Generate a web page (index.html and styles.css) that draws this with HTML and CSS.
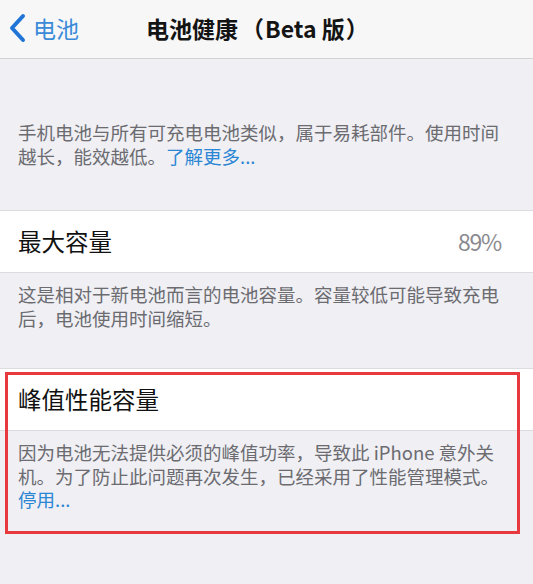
FILE: index.html
```html
<!DOCTYPE html>
<html lang="zh-CN">
<head>
<meta charset="utf-8">
<title>电池健康（Beta 版）</title>
<link rel="stylesheet" href="styles.css">
</head>
<body>
<header class="nav">
  <a class="back">
    <svg class="chev" width="18" height="30" viewBox="0 0 18 30"><polyline points="15,3 4,15 15,27" fill="none" stroke="#1f74d6" stroke-width="4" stroke-linecap="round" stroke-linejoin="round"/></svg>
    <span class="back-text">电池</span>
  </a>
  <h1 class="title">电池健康<span class="paren">（</span>Beta 版<span class="paren-close">）</span></h1>
</header>
<main>
  <p class="foot foot-first">手机电池与所有可充电电池类似，属于易耗部件。使用时间越长，能效越低。<span class="link">了解更多...</span></p>
  <div class="row">
    <span class="row-label">最大容量</span>
    <span class="row-value">89%</span>
  </div>
  <p class="foot">这是相对于新电池而言的电池容量。容量较低可能导致充电后，电池使用时间缩短。</p>
  <section class="peak">
    <div class="row row-peak">
      <span class="row-label">峰值性能容量</span>
    </div>
    <p class="foot">因为电池无法提供必须的峰值功率，导致此 iPhone 意外关机。为了防止此问题再次发生，已经采用了性能管理模式。<span class="link">停用...</span></p>
    <div class="highlight"></div>
  </section>
</main>
</body>
</html>
```

FILE: styles.css
```css
html, body {
  margin: 0;
  padding: 0;
}
body {
  width: 533px;
  height: 584px;
  overflow: hidden;
  background: #efeff4;
  font-family: "Noto Sans CJK SC", "Noto Sans", sans-serif;
  color: #111;
}
.nav {
  height: 58px;
  background: #f7f7f8;
  border-bottom: 1px solid #d3d3d6;
  display: flex;
  align-items: center;
  box-sizing: content-box;
}
.back {
  display: flex;
  align-items: center;
  margin-left: 8px;
  color: #3a8ad8;
}
.chev {
  display: block;
  margin-top: -2px;
}
.back-text {
  font-size: 23px;
  line-height: 30px;
  margin-left: 7px;
  margin-top: -3px;
}
.title {
  margin: -3px 0 0 67px;
  font-size: 23px;
  font-weight: 700;
  line-height: 30px;
  color: #141414;
}
.paren {
  margin: 0 1px 0 3px;
}
.paren-close {
  margin-left: 1px;
}
main {
  display: flex;
  flex-direction: column;
}
.foot {
  margin: 0;
  padding: 10px 18px 14px 18px;
  font-size: 18.5px;
  line-height: 23.5px;
  color: #6b6b70;
}
.foot-first {
  padding-top: 62px;
  padding-bottom: 42px;
}
.link {
  color: #2b86d3;
}
.row {
  height: 63px;
  background: #fff;
  border-top: 1px solid #dcdce0;
  border-bottom: 1px solid #dcdce0;
  box-sizing: border-box;
  display: flex;
  align-items: center;
  justify-content: space-between;
  padding: 0 32px 0 18px;
}
.row-label {
  font-size: 23.5px;
  color: #111;
  margin-top: -2px;
}
.row-value {
  font-size: 23px;
  letter-spacing: -1.2px;
  color: #8a8a8f;
  margin-top: -2px;
}
.peak {
  position: relative;
  margin-top: 24px;
}
.row-peak {
  height: 63px;
}
.highlight {
  position: absolute;
  left: 5px;
  top: 4px;
  width: 515px;
  height: 162px;
  border: 3px solid #e8393f;
  box-sizing: border-box;
  pointer-events: none;
}
```
